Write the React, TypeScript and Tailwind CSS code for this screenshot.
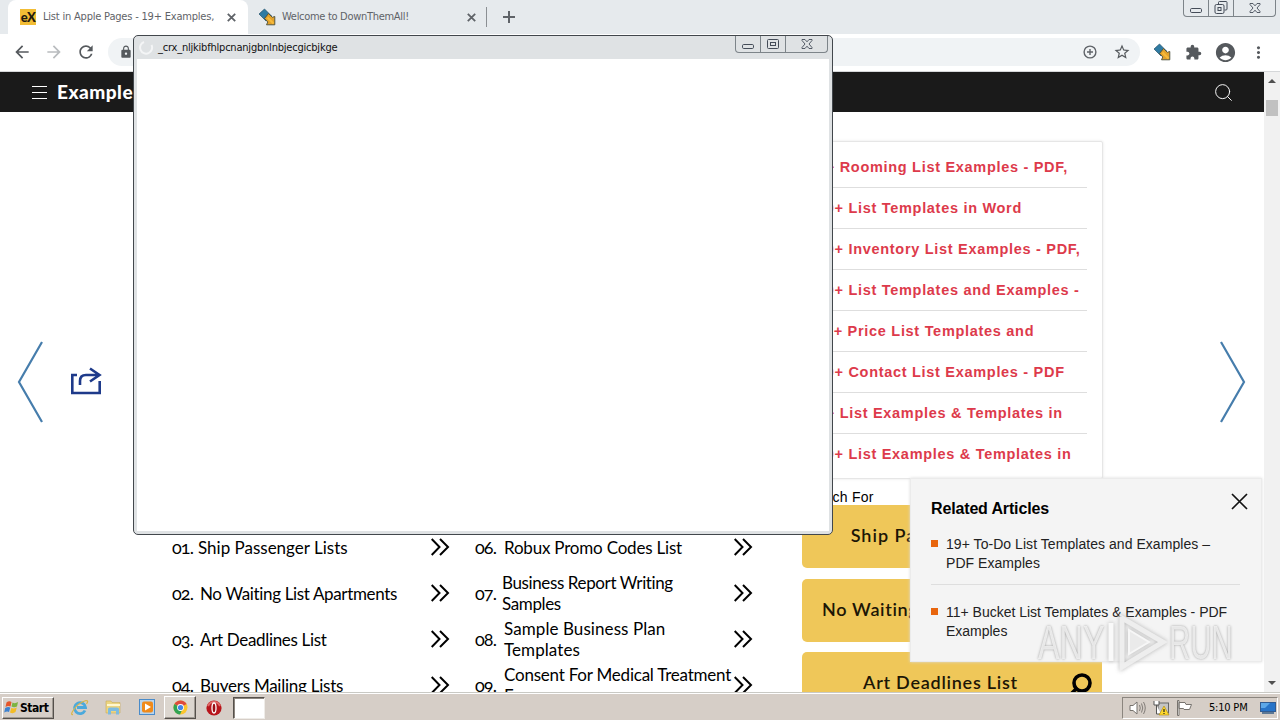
import type { ReactNode } from "react";
import { Search } from "lucide-react";
import { MdAccountCircle, MdArrowBack, MdArrowForward, MdExtension, MdLock, MdMoreVert, MdOutlineStarBorder, MdRefresh } from "react-icons/md";

const ROOMS = [
  "9+ Rooming List Examples - PDF,",
  "10+ List Templates in Word",
  "10+ Inventory List Examples - PDF,",
  "10+ List Templates and Examples -",
  "11+ Price List Templates and",
  "10+ Contact List Examples - PDF",
  "9+ List Examples & Templates in",
  "10+ List Examples & Templates in",
];

const LEFT_ADS = [
  { num: "01.", lines: ["Ship Passenger Lists"], cls: "ml-[3px]" },
  { num: "02.", lines: ["No Waiting List Apartments"], cls: "ml-[5px] tracking-[-0.350px]" },
  { num: "03.", lines: ["Art Deadlines List"], cls: "ml-[5px] tracking-[-0.330px]" },
  { num: "04.", lines: ["Buyers Mailing Lists"], cls: "ml-[5px] tracking-[-0.250px]" },
];

const RIGHT_ADS = [
  { num: "06.", lines: ["Robux Promo Codes List"], cls: "ml-[6px] tracking-[-0.200px]" },
  { num: "07.", lines: ["Business Report Writing", "Samples"], cls: "ml-[4px] tracking-[-0.380px]" },
  { num: "08.", lines: ["Sample Business Plan", "Templates"], cls: "ml-[6px] tracking-[0.080px]" },
  { num: "09.", lines: ["Consent For Medical Treatment", "Form"], cls: "ml-[6px] tracking-[-0.220px]" },
];

const SEARCHES = [
  { text: "Ship Passenger Lists", cls: "tracking-[1px]" },
  { text: "No Waiting List Apartments", cls: "tracking-[0.650px]" },
  { text: "Art Deadlines List", cls: "tracking-[0.750px]" },
];

function DtaIcon() {
  return (
    <svg width="18" height="18" viewBox="0 0 18 18">
      <path d="M1 6 L6.500 1 L13.500 8 L8 13 Z" fill="#2f7ba3" stroke="#245069" strokeWidth="0.700" />
      <path d="M6.500 10.500 L10.500 5.500 L14.300 9.300 L16.800 8.500 V16.800 H8.500 L9.800 14 Z" fill="#e3a22b" stroke="#4a4f3c" strokeWidth="0.900" />
      <path d="M9.500 9.500 L15.500 15.500" stroke="#f7bb3c" strokeWidth="2" />
    </svg>
  );
}

function TabClose() {
  return (
    <svg className="shrink-0" width="9" height="9" viewBox="0 0 9 9" stroke="#5f6368" strokeWidth="1.800">
      <path d="M0.800 0.800 L8.200 8.200 M8.200 0.800 L0.800 8.200" />
    </svg>
  );
}

function MinGlyph() {
  return (
    <svg width="12" height="5" fill="none" stroke="#444c58">
      <rect x="0.500" y="0.500" width="11" height="4" rx="1.200" />
    </svg>
  );
}

function CloseGlyph() {
  return (
    <svg width="12" height="10" viewBox="0 0 12 10" fill="none" stroke="#444c58" strokeWidth="0.900">
      <path d="M1 0.500 H4 L6 2.800 L8 0.500 H11 V1.500 L8 5 L11 8.500 V9.500 H8 L6 7.200 L4 9.500 H1 V8.500 L4 5 L1 1.500 Z" />
    </svg>
  );
}

function TabStrip() {
  return (
    <div className="flex h-[34px] shrink-0 bg-[#e6eaed]">
      <div className="ml-2 flex h-full w-[240px] items-center rounded-t-lg bg-white pl-3">
        <div className="flex size-4 shrink-0 items-center justify-center bg-[#f2bd35] font-['Lato',sans-serif] text-[13px] font-black leading-none tracking-[-0.500px] text-[#1f1a10]">
          eX
        </div>
        <span className="ml-[7px] mt-px w-[184px] shrink-0 whitespace-nowrap font-['DejaVu_Sans_Condensed','DejaVu_Sans',sans-serif] text-[11px] tracking-[-0.200px] text-[#5f6368]">
          List in Apple Pages - 19+ Examples,
        </span>
        <TabClose />
      </div>
      <div className="flex h-full items-center pl-[10px]">
        <DtaIcon />
        <span className="ml-[6px] mt-px w-[185px] whitespace-nowrap font-['DejaVu_Sans_Condensed','DejaVu_Sans',sans-serif] text-[11px] tracking-[-0.300px] text-[#5f6368]">
          Welcome to DownThemAll!
        </span>
        <TabClose />
        <div className="ml-[10px] h-5 w-px bg-[#8b8f93]" />
        <svg className="ml-4" width="12" height="12" stroke="#5f6368" strokeWidth="2">
          <path d="M6 0 V12 M0 6 H12" />
        </svg>
      </div>
      <div className="ml-auto mr-1 flex h-[17px] w-[93px] rounded-b-[4px] border border-t-0 border-[#7d8489]">
        <div className="flex w-[25px] items-end justify-center border-r border-[#7d8489] pb-[3px]"><MinGlyph /></div>
        <div className="flex w-[25px] items-center justify-center border-r border-[#7d8489]">
          <svg width="14" height="14" viewBox="0 0 14 14" fill="none" stroke="#444c58">
            <path d="M4.500 3 V1.500 Q4.500 0.500 5.500 0.500 H12 Q13 0.500 13 1.500 V8 Q13 9 12 9 H10.500" />
            <rect x="1" y="3.500" width="9" height="9" rx="1.500" />
            <rect x="4" y="6.500" width="3" height="3" />
          </svg>
        </div>
        <div className="flex flex-1 items-center justify-center"><CloseGlyph /></div>
      </div>
    </div>
  );
}

function Toolbar() {
  return (
    <div className="flex h-[38px] shrink-0 items-center border-b border-[#d5d7d9] bg-white pb-px text-[#55595d]">
      <MdArrowBack className="ml-3 size-5" />
      <MdArrowForward className="ml-3 size-5 text-[#b9bcbf]" />
      <MdRefresh className="ml-3 size-5" />
      <div className="ml-[12px] flex h-7 w-[1032px] items-center rounded-full bg-[#f0f3f5] pl-[11px] pr-[9px]">
        <MdLock className="size-[14px]" />
        <svg className="ml-auto" width="14" height="14" fill="none" stroke="#5f6368" strokeWidth="1.400">
          <circle cx="7" cy="7" r="5.900" />
          <path d="M7 4 V10 M4 7 H10" />
        </svg>
        <MdOutlineStarBorder className="ml-[16px] size-[18px]" />
      </div>
      <span className="ml-[13px]"><DtaIcon /></span>
      <MdExtension className="ml-[14px] size-[17px]" />
      <MdAccountCircle className="ml-[12px] size-[23px]" />
      <MdMoreVert className="ml-[12px] size-[19px]" />
    </div>
  );
}

function AdRow({ num, lines, cls }: { num: string; lines: string[]; cls: string }) {
  return (
    <div className="flex h-[46px] items-center whitespace-nowrap">
      <span className="w-[23px] shrink-0 text-[18px] tracking-[-0.900px] oldstyle-nums">{num}</span>
      <div className={`min-w-0 flex-1 leading-[21px] ${cls}`}>
        {lines.map((line) => <div key={line}>{line}</div>)}
      </div>
      <svg className="shrink-0" width="19" height="18" fill="none" stroke="#000" strokeWidth="2">
        <path d="M0.700 1 L8.500 9 L0.700 17 M9 1 L17 9 L9 17" />
      </svg>
    </div>
  );
}

function Sidebar() {
  return (
    <div className="mt-[29px] w-[301px] shrink-0">
      <div className="h-[338px] rounded-[2px] border border-[#e6e6e6] pl-[14px] pr-[15px] pt-[5px] shadow-[0_0_3px_#e4e4e4]">
        {ROOMS.map((room) => (
          <div key={room} className="flex h-[41px] items-center whitespace-nowrap border-b border-[#dedede] pt-[2px] font-['Liberation_Sans',Arial,sans-serif] text-[14.500px] font-bold tracking-[0.700px] text-[#dd3a4b] last:border-transparent">
            {room}
          </div>
        ))}
      </div>
      <div className="h-[26px] pt-[10px] font-['Liberation_Sans',Arial,sans-serif] text-[14px] leading-4 tracking-[0.250px]">Search For</div>
      <div className="flex flex-col gap-[10.500px]">
        {SEARCHES.map((s) => (
          <div key={s.text} className="flex h-[63px] w-[300px] items-center rounded-[5px] bg-[#efc759]">
            <span className={`-mt-[2px] flex-1 whitespace-nowrap pl-[10px] text-center font-['Lato',sans-serif] text-[18px] font-semibold text-[#1c1606] ${s.cls}`}>{s.text}</span>
            <Search className="mr-[9px] size-[24px] shrink-0 -scale-x-100 text-black" strokeWidth={3.600} />
          </div>
        ))}
      </div>
    </div>
  );
}

function WebPage() {
  return (
    <div className="flex h-full w-[1264px] flex-col overflow-hidden bg-white">
      <div className="flex h-10 shrink-0 items-center bg-[#1a1a1a] text-white">
        <svg className="ml-8 mt-px" width="15" height="14" stroke="#fff">
          <path d="M0 0.500 H15 M0 6.500 H15 M0 12.500 H15" />
        </svg>
        <span className="ml-[10px] mt-px font-['Lato',sans-serif] text-[19px] font-black tracking-[0.500px]">Examples</span>
        <Search className="ml-auto mr-[30px] size-[21px]" strokeWidth={1.100} />
      </div>
      <div className="flex min-h-0 flex-1 overflow-hidden pl-[172px] text-black">
        <div className="mr-[49px] flex h-fit gap-[25px] pt-[412px] font-['Lato',sans-serif] text-[17px] [font-variant-ligatures:none]">
          <div className="w-[278px]">{LEFT_ADS.map((a) => <AdRow key={a.num} {...a} />)}</div>
          <div className="w-[278px]">{RIGHT_ADS.map((a) => <AdRow key={a.num} {...a} />)}</div>
        </div>
        <Sidebar />
      </div>
    </div>
  );
}

function ScrollBar() {
  return (
    <div className="flex w-4 flex-col items-center bg-[#f1f1f1]">
      <div className="mt-[7px] border-x-4 border-b-4 border-x-transparent border-b-[#505050]" />
      <div className="mt-[17px] h-4 w-3 bg-[#c1c1c1]" />
      <div className="mb-[7px] mt-auto border-x-4 border-t-4 border-x-transparent border-t-[#505050]" />
    </div>
  );
}

function Article({ children, cls }: { children: ReactNode; cls: string }) {
  return (
    <div className={`flex whitespace-nowrap text-[14px] leading-[19px] text-[#222] ${cls}`}>
      <span className="mr-2 mt-[5px] size-[7px] shrink-0 bg-[#e8650d]" />
      <p>{children}</p>
    </div>
  );
}

function RelatedArticles() {
  return (
    <div className="absolute left-[910px] top-[478px] h-[184px] w-[352px] border border-[#ebebeb] bg-[#f4f4f4] pl-5 pr-[21px] font-['Liberation_Sans',Arial,sans-serif] shadow-[0_0_3px_#ddd]">
      <div className="flex h-[56px] justify-between">
        <h3 className="mt-[20px] text-[16px] font-bold leading-[20px] tracking-[-0.150px] text-black">Related Articles</h3>
        <svg className="-mr-[8px] mt-[14px]" width="17" height="17" stroke="#111" strokeWidth="1.700">
          <path d="M1 1 L16 16 M16 1 L1 16" />
        </svg>
      </div>
      <Article cls="tracking-[0.050px]">19+ To-Do List Templates and Examples –<br />PDF Examples</Article>
      <div className="mb-[18px] mt-[11px] h-px bg-[#dedede]" />
      <Article cls="tracking-[-0.010px]">11+ Bucket List Templates &amp; Examples - PDF<br />Examples</Article>
    </div>
  );
}

function PopupWindow() {
  return (
    <div className="absolute left-[133px] top-[35px] flex h-[500px] w-[700px] flex-col rounded-[5px] border border-[#42474c] bg-[#dfe2e4] px-[3px] pb-[3px]">
      <div className="flex h-[23px] shrink-0">
        <svg className="ml-[2px] mt-1" width="15" height="15" fill="none" stroke="#f4f5f6" strokeWidth="2">
          <path d="M5 2 A6 6 0 1 0 12.500 5" />
        </svg>
        <span className="ml-1 mt-[4px] font-['DejaVu_Sans_Condensed','DejaVu_Sans',sans-serif] text-[11px] leading-4 tracking-[-0.210px] text-[#111]">
          _crx_nljkibfhlpcnanjgbnlnbjecgicbjkge
        </span>
        <div className="ml-auto mr-[1px] flex h-[17px] w-[93px] rounded-b-[4px] border border-t-0 border-[#7d8489]">
          <div className="flex w-[25px] items-end justify-center border-r border-[#7d8489] pb-[3px]"><MinGlyph /></div>
          <div className="flex w-[25px] items-center justify-center border-r border-[#7d8489]">
            <svg width="12" height="10" fill="none" stroke="#444c58">
              <rect x="0.500" y="0.500" width="11" height="9" rx="1" />
              <rect x="3.500" y="3.500" width="5" height="3" />
            </svg>
          </div>
          <div className="flex flex-1 items-center justify-center"><CloseGlyph /></div>
        </div>
      </div>
      <div className="flex-1 bg-white" />
    </div>
  );
}

function Watermark() {
  return (
    <div className="absolute left-[1038px] top-[612px] flex h-[60px] w-[200px] items-center font-['Liberation_Sans',Arial,sans-serif] text-[49px] leading-none text-[#f8f8f8]/80 [text-shadow:0_0_3px_#999]">
      <span className="w-[69px] shrink-0"><span className="inline-block origin-left scale-x-[0.660]">ANY</span></span>
      <svg className="shrink-0 opacity-85 drop-shadow-[0_0_2px_#aaa]" width="62" height="60" viewBox="0 0 62 60" fill="none">
        <path d="M4 11 V49" stroke="#fafafa" strokeWidth="5" />
        <path d="M15 6 V55 L56 30 Z" stroke="#ededed" strokeWidth="5" />
        <path d="M22 18 V42 L42 30 Z" fill="#e9e9e9" stroke="#f8f8f8" strokeWidth="2" />
      </svg>
      <span className="inline-block origin-left scale-x-[0.600]">RUN</span>
    </div>
  );
}

function Taskbar() {
  return (
    <div className="flex h-7 shrink-0 items-center border-t border-[#c9c9c4] bg-[#d6cec7] shadow-[inset_0_1px_#fff]">
      <div className="ml-[2px] mt-[2px] flex h-[22px] w-[52px] items-center border border-b-[#55504b] border-l-white border-r-[#55504b] border-t-white pl-[1px] shadow-[inset_-1px_-1px_#a09a93]">
        <svg className="shrink-0" width="15" height="15" viewBox="0 0 15 15">
          <path d="M2.500 2.500 Q5 0.500 7.500 2 L6.500 6.500 Q4 5.500 1.500 7 Z" fill="#e5562b" />
          <path d="M8.500 2.500 Q11 4 14 2 L13 6.500 Q10 8 7.500 6.500 Z" fill="#7cb342" />
          <path d="M1.200 8 Q4 6.500 6.300 7.500 L5 12 Q3 11 0.200 12.500 Z" fill="#3d82d0" />
          <path d="M7.300 8 Q10 9 12.800 7.500 L11.500 12 Q9 14 6 12.500 Z" fill="#f3bc26" />
        </svg>
        <span className="ml-px font-['DejaVu_Sans_Condensed','DejaVu_Sans',sans-serif] text-[12px] font-bold tracking-[-0.450px] text-black">Start</span>
      </div>
      <svg className="ml-[17px] mt-[2px]" width="18" height="18" viewBox="0 0 18 18" fill="none">
        <path d="M14 11.500 A5.500 5.500 0 1 1 14.500 8.500 H6" stroke="#4ba9dc" strokeWidth="2.800" />
        <path d="M2 15.500 Q-1 16 2.500 11 Q7 4 15 1.500 Q18 1.500 15.500 5" stroke="#d9b64a" strokeWidth="1.200" />
      </svg>
      <svg className="ml-[16px] mt-[2px]" width="17" height="17" viewBox="0 0 17 17">
        <path d="M1 4 V2 H6 L7 3.500 H15 V14 H1 Z" fill="#ecd581" stroke="#c9ad57" strokeWidth="0.600" />
        <path d="M2 6 H15" stroke="#fff7cf" strokeWidth="2" />
        <path d="M3 15.500 V10 Q3 8.500 5 8.500 H12 Q14 8.500 14 10 V15.500 H11 V12 H6 V15.500 Z" fill="#7dbbe0" />
      </svg>
      <svg className="ml-[17px] mt-[2px]" width="17" height="17" viewBox="0 0 17 17">
        <rect x="0.500" y="0.500" width="15" height="15" fill="#b9d4ec" stroke="#4a8bc9" />
        <rect x="3" y="2.500" width="11" height="11" rx="2" fill="#f08a1a" />
        <path d="M6 4.500 L12 8 L6 11.500 Z" fill="#fff" />
      </svg>
      <div className="ml-[8px] mt-[2px] flex h-[23px] w-[32px] items-center justify-center border border-b-[#55504b] border-l-white border-r-[#55504b] border-t-white bg-[#dcd6cf] shadow-[inset_-1px_-1px_#a09a93]">
        <svg width="15" height="15" viewBox="0 0 15 15">
          <circle cx="7.500" cy="7.500" r="7" fill="#fbc52d" />
          <path d="M7.500 7.500 L1.400 4 A7 7 0 0 1 13.600 4 Z" fill="#dd4b3e" />
          <path d="M7.500 7.500 L1.400 4 A7 7 0 0 0 7 14.500 L9.500 9 Z" fill="#31a353" />
          <circle cx="7.500" cy="7.500" r="3.400" fill="#fff" />
          <circle cx="7.500" cy="7.500" r="2.600" fill="#4285e8" />
        </svg>
      </div>
      <svg className="ml-[10px] mt-[2px]" width="16" height="16" viewBox="0 0 16 16">
        <circle cx="8" cy="8" r="7.600" fill="#b8151b" />
        <path d="M2 6 A6.500 6.500 0 0 1 14 6" stroke="#df6a68" strokeWidth="2" fill="none" />
        <ellipse cx="8" cy="8" rx="2" ry="5" fill="#9b0d12" stroke="#fff" strokeWidth="1.300" />
      </svg>
      <div className="ml-[11px] mt-[2px] h-[22px] w-[32px] border border-b-[#efece8] border-l-[#55504b] border-r-[#efece8] border-t-[#55504b] bg-white shadow-[inset_1px_1px_#8b857e]" />
      <div className="ml-auto mr-[2px] mt-[2px] flex h-[22px] w-[156px] items-center border border-b-white border-l-[#8b857e] border-r-white border-t-[#8b857e]">
        <svg className="ml-[6px]" width="17" height="16" viewBox="0 0 17 16" fill="none" stroke="#77736e">
          <path d="M1 5.500 H4 L8 2 V14 L4 10.500 H1 Z" fill="#fff" />
          <path d="M10.500 5 Q12 8 10.500 11 M12.500 3.500 Q15 8 12.500 12.500 M14.500 2 Q18 8 14.500 14" strokeWidth="0.900" />
        </svg>
        <svg className="ml-[7px]" width="17" height="16" viewBox="0 0 17 16">
          <rect x="5" y="3" width="10.500" height="10" fill="#c4c4c4" stroke="#666" />
          <path d="M1 1 V5 H6 V1 M3.500 5 V14 H8" stroke="#555" fill="#fff" />
          <path d="M11 6 L16 15 H6 Z" fill="#ffd92c" stroke="#ad860e" strokeWidth="0.600" />
          <path d="M11 9 V12 M11 13 V14" stroke="#222" strokeWidth="1.200" />
        </svg>
        <svg className="ml-[6px]" width="17" height="16" viewBox="0 0 17 16" fill="#fff" stroke="#77736e">
          <path d="M1.500 0.500 H3 V15.500 H1.500 Z M3 2.500 H9 L10 4.500 H15.500 L13.500 9.500 H8 L7.500 8.500 H3 Z" />
        </svg>
        <span className="ml-[16px] mt-px w-[44px] whitespace-nowrap font-['DejaVu_Sans_Condensed','DejaVu_Sans',sans-serif] text-[11px] tracking-[-0.200px] text-black">5:10 PM</span>
        <svg className="ml-[7px]" width="16" height="14" viewBox="0 0 16 14">
          <rect x="0.500" y="1.500" width="15" height="9" fill="#2874c8" stroke="#315b91" />
          <path d="M1 2 H10 L5 7 H1 Z" fill="#5ca7e8" />
          <path d="M2 12 H14" stroke="#5d7895" strokeWidth="2" />
        </svg>
      </div>
    </div>
  );
}

export default function App() {
  return (
    <div className="relative flex h-[720px] w-[1280px] flex-col overflow-hidden bg-white">
      <TabStrip />
      <Toolbar />
      <div className="flex h-[620px] shrink-0">
        <WebPage />
        <ScrollBar />
      </div>
      <Taskbar />

      {/* page controls floating over the article */}
      <svg className="absolute left-[17px] top-[341px]" width="27" height="82" fill="none" stroke="#467dac" strokeWidth="2.200">
        <path d="M25 1 L2 41 L25 81" />
      </svg>
      <svg className="absolute left-[1219px] top-[341px]" width="27" height="82" fill="none" stroke="#467dac" strokeWidth="2.200">
        <path d="M2 1 L25 41 L2 81" />
      </svg>
      <svg className="absolute left-[70px] top-[367px]" width="33" height="29" fill="none" stroke="#1e3a8a" strokeWidth="2.600">
        <path d="M7 8 H2.300 V26 H29.700 V14" />
        <path d="M10 18 V14 Q10 8 16 8 H29 M20 1.500 L29.500 8 L20 14.500" />
      </svg>
      <RelatedArticles />
      <PopupWindow />
      <Watermark />
    </div>
  );
}
